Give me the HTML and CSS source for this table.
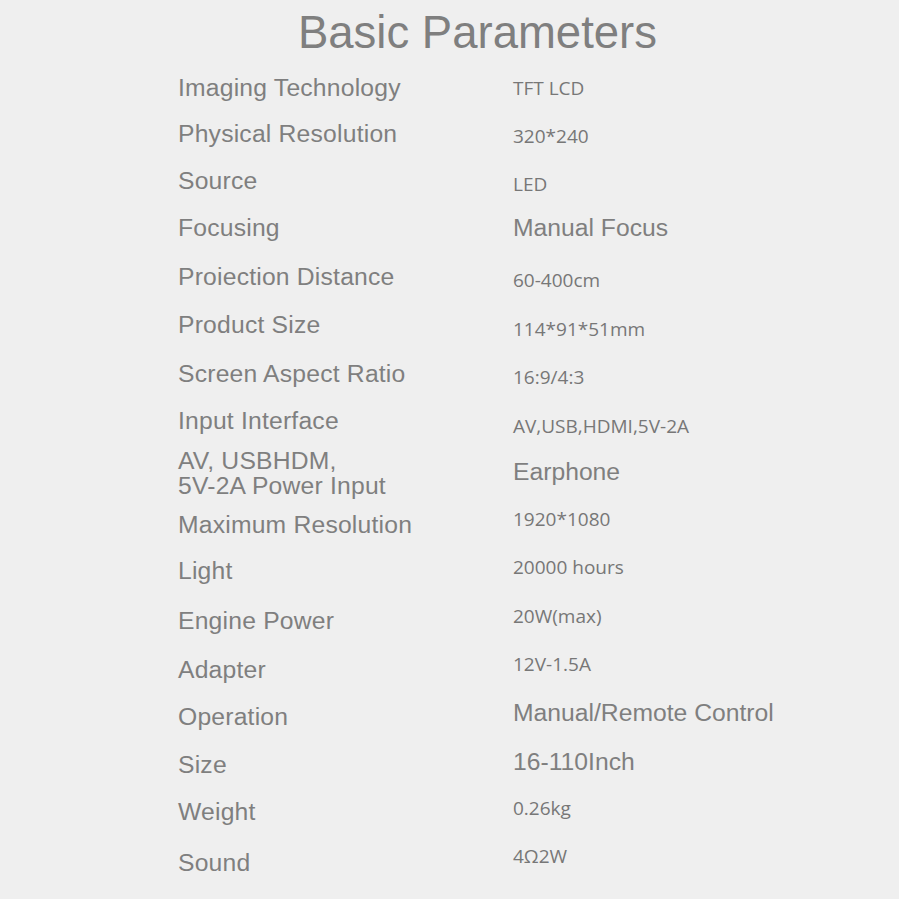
FILE: index.html
```html
<!DOCTYPE html>
<html lang="en">
<head>
<meta charset="utf-8">
<title>Basic Parameters</title>
<link rel="stylesheet" href="styles.css">
</head>
<body>
<main class="page">
  <h1 class="title">Basic Parameters</h1>
  <div class="table">
    <div class="row"><div class="label">Imaging Technology</div><div class="value">TFT LCD</div></div>
    <div class="row"><div class="label">Physical Resolution</div><div class="value">320*240</div></div>
    <div class="row"><div class="label">Source</div><div class="value">LED</div></div>
    <div class="row"><div class="label">Focusing</div><div class="value value-lg">Manual Focus</div></div>
    <div class="row"><div class="label">Proiection Distance</div><div class="value">60-400cm</div></div>
    <div class="row"><div class="label">Product Size</div><div class="value">114*91*51mm</div></div>
    <div class="row"><div class="label">Screen Aspect Ratio</div><div class="value">16:9/4:3</div></div>
    <div class="row"><div class="label">Input Interface</div><div class="value">AV,USB,HDMI,5V-2A</div></div>
    <div class="row"><div class="label label-2l">AV, USBHDM,<br>5V-2A Power Input</div><div class="value value-lg">Earphone</div></div>
    <div class="row"><div class="label">Maximum Resolution</div><div class="value">1920*1080</div></div>
    <div class="row"><div class="label">Light</div><div class="value">20000 hours</div></div>
    <div class="row"><div class="label">Engine Power</div><div class="value">20W(max)</div></div>
    <div class="row"><div class="label">Adapter</div><div class="value">12V-1.5A</div></div>
    <div class="row"><div class="label">Operation</div><div class="value value-lg">Manual/Remote Control</div></div>
    <div class="row"><div class="label">Size</div><div class="value value-lg">16-110Inch</div></div>
    <div class="row"><div class="label">Weight</div><div class="value">0.26kg</div></div>
    <div class="row"><div class="label">Sound</div><div class="value">4Ω2W</div></div>
  </div>
</main>
</body>
</html>
```
FILE: styles.css
```css
html, body {
  margin: 0;
  padding: 0;
  background: #efefef;
}

.page {
  width: 899px;
  height: 899px;
  overflow: hidden;
  background: #efefef;
  font-family: "Liberation Sans", Arial, sans-serif;
  color: #808080;
}

.title {
  margin: 8px 0 0 0;
  padding-left: 56px;
  text-align: center;
  font-weight: normal;
  font-size: 45.5px;
  line-height: 50px;
  color: #7f7f7f;
}

.table {
  margin-top: 16px;
  padding-left: 178px;
  display: flex;
  flex-direction: column;
}

.row {
  display: grid;
  grid-template-columns: 335px 1fr;
  align-items: start;
  height: 48px;
}

.label {
  font-size: 24.7px;
  line-height: 28px;
  letter-spacing: 0.2px;
  color: #7f7f7f;
  white-space: nowrap;
}

.label-2l {
  line-height: 25px;
}

.value {
  font-family: "Open Sans", "Noto Sans", sans-serif;
  font-size: 19px;
  line-height: 28px;
  color: #777777;
  white-space: nowrap;
}

.value-lg {
  font-family: "Liberation Sans", Arial, sans-serif;
  font-size: 24.7px;
  color: #7f7f7f;
}

/* row heights */
.row:nth-child(1)  { height: 46px; }
.row:nth-child(2)  { height: 47px; }
.row:nth-child(3)  { height: 47px; }
.row:nth-child(4)  { height: 49px; }
.row:nth-child(5)  { height: 48px; }
.row:nth-child(6)  { height: 49px; }
.row:nth-child(7)  { height: 47px; }
.row:nth-child(8)  { height: 41px; }
.row:nth-child(9)  { height: 63px; }
.row:nth-child(10) { height: 46px; }
.row:nth-child(11) { height: 50px; }
.row:nth-child(12) { height: 49px; }
.row:nth-child(13) { height: 47px; }
.row:nth-child(14) { height: 48px; }
.row:nth-child(15) { height: 47px; }
.row:nth-child(16) { height: 51px; }
.row:nth-child(17) { height: 50px; }

/* value offsets within each row */
.row:nth-child(2)  .value { margin-top: 1.5px; }
.row:nth-child(3)  .value { margin-top: 2.5px; }
.row:nth-child(5)  .value { margin-top: 2.5px; }
.row:nth-child(6)  .value { margin-top: 4px; }
.row:nth-child(7)  .value { margin-top: 3px; }
.row:nth-child(8)  .value { margin-top: 5px; }
.row:nth-child(9)  .value { margin-top: 10px; }
.row:nth-child(10) .value { margin-top: -6.5px; }
.row:nth-child(11) .value { margin-top: -4px; }
.row:nth-child(12) .value { margin-top: -5.5px; }
.row:nth-child(13) .value { margin-top: -6.5px; }
.row:nth-child(14) .value { margin-top: -4.5px; }
.row:nth-child(15) .value { margin-top: -3.5px; }
.row:nth-child(16) .value { margin-top: -4px; }
.row:nth-child(17) .value { margin-top: -7px; }
```
